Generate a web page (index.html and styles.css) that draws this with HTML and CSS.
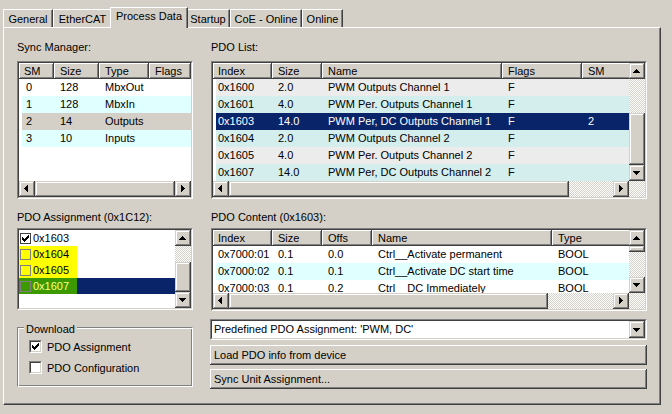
FILE: index.html
```html
<!DOCTYPE html>
<html>
<head>
<meta charset="utf-8">
<title>Process Data</title>
<link rel="stylesheet" href="styles.css">
</head>
<body>
<div class="tabs">
  <div class="tab t-general">General</div>
  <div class="tab t-ethercat">EtherCAT</div>
  <div class="tab t-process active">Process Data</div>
  <div class="tab t-startup">Startup</div>
  <div class="tab t-coe">CoE - Online</div>
  <div class="tab t-online">Online</div>
</div>
<div class="panel">
  <div class="col col-left">
    <div class="label">Sync Manager:</div>
    <div class="lv lv-sm">
      <div class="lv-in">
        <div class="view">
          <div class="hrow"><span class="hc">SM</span><span class="hc">Size</span><span class="hc">Type</span><span class="hc">Flags</span></div>
          <div class="row r-white"><span>0</span><span>128</span><span>MbxOut</span><span></span></div>
          <div class="row r-cyan"><span>1</span><span>128</span><span>MbxIn</span><span></span></div>
          <div class="row r-gray"><span>2</span><span>14</span><span>Outputs</span><span></span></div>
          <div class="row r-cyan"><span>3</span><span>10</span><span>Inputs</span><span></span></div>
        </div>
        <div class="hsb">
          <div class="sbtn sb-left"><svg width="4" height="7" viewBox="0 0 4 7"><path d="M0 3h1v1H0zM1 2h1v3H1zM2 1h1v5H2zM3 0h1v7H3z"/></svg></div>
          <div class="thumb grow"></div>
          <div class="sbtn sb-right"><svg width="4" height="7" viewBox="0 0 4 7"><path d="M0 0h1v7H0zM1 1h1v5H1zM2 2h1v3H2zM3 3h1v1H3z"/></svg></div>
        </div>
      </div>
    </div>
    <div class="label label-2">PDO Assignment (0x1C12):</div>
    <div class="lv listbox">
      <div class="lv-in lb-in">
        <div class="view">
          <div class="li"><span class="li-mark"><span class="lcb lcb-on"><svg width="7" height="7" viewBox="0 0 7 7"><path d="M6 0h1v1H6zM5 1h2v1H5zM0 2h1v1H0zM4 2h3v1H4zM0 3h2v1H0zM3 3h3v1H3zM0 4h5v1H0zM1 5h3v1H1zM2 6h1v1H2z"/></svg></span>0x1603</span></div>
          <div class="li"><span class="li-mark hl-yellow"><span class="lcb"></span>0x1604</span></div>
          <div class="li"><span class="li-mark hl-yellow"><span class="lcb"></span>0x1605</span></div>
          <div class="li li-sel"><span class="li-mark hl-green"><span class="lcb"></span>0x1607</span></div>
        </div>
        <div class="vsb">
          <div class="sbtn sb-up"><svg width="7" height="4" viewBox="0 0 7 4"><path d="M3 0h1v1H3zM2 1h3v1H2zM1 2h5v1H1zM0 3h7v1H0z"/></svg></div>
          <div class="track lb-track"></div>
          <div class="thumb lb-thumb"></div>
          <div class="sbtn sb-down"><svg width="7" height="4" viewBox="0 0 7 4"><path d="M0 0h7v1H0zM1 1h5v1H1zM2 2h3v1H2zM3 3h1v1H3z"/></svg></div>
        </div>
      </div>
    </div>
    <fieldset class="group">
      <legend>Download</legend>
      <div class="chk-row"><span class="cb"><span class="cb-in"><svg width="7" height="7" viewBox="0 0 7 7"><path d="M6 0h1v1H6zM5 1h2v1H5zM0 2h1v1H0zM4 2h3v1H4zM0 3h2v1H0zM3 3h3v1H3zM0 4h5v1H0zM1 5h3v1H1zM2 6h1v1H2z"/></svg></span></span><span>PDO Assignment</span></div>
      <div class="chk-row"><span class="cb"><span class="cb-in"></span></span><span>PDO Configuration</span></div>
    </fieldset>
  </div>

  <div class="col col-right">
    <div class="label shift">PDO List:</div>
    <div class="lv lv-pdo shift">
      <div class="lv-in">
        <div class="view">
          <div class="hrow"><span class="hc">Index</span><span class="hc">Size</span><span class="hc">Name</span><span class="hc">Flags</span><span class="hc">SM</span></div>
          <div class="row r-lgray"><span>0x1600</span><span>2.0</span><span>PWM Outputs Channel 1</span><span>F</span><span></span></div>
          <div class="row r-tcyan"><span>0x1601</span><span>4.0</span><span>PWM Per. Outputs Channel 1</span><span>F</span><span></span></div>
          <div class="row r-sel"><span>0x1603</span><span>14.0</span><span>PWM Per, DC Outputs Channel 1</span><span>F</span><span>2</span></div>
          <div class="row r-tcyan"><span>0x1604</span><span>2.0</span><span>PWM Outputs Channel 2</span><span>F</span><span></span></div>
          <div class="row r-lgray"><span>0x1605</span><span>4.0</span><span>PWM Per. Outputs Channel 2</span><span>F</span><span></span></div>
          <div class="row r-tcyan"><span>0x1607</span><span>14.0</span><span>PWM Per, DC Outputs Channel 2</span><span>F</span><span></span></div>
        </div>
        <div class="vsb">
          <div class="sbtn sb-up"><svg width="7" height="4" viewBox="0 0 7 4"><path d="M3 0h1v1H3zM2 1h3v1H2zM1 2h5v1H1zM0 3h7v1H0z"/></svg></div>
          <div class="track pdo-vtrack"></div>
          <div class="thumb pdo-vthumb"></div>
          <div class="sbtn sb-down"><svg width="7" height="4" viewBox="0 0 7 4"><path d="M0 0h7v1H0zM1 1h5v1H1zM2 2h3v1H2zM3 3h1v1H3z"/></svg></div>
        </div>
        <div class="hsb">
          <div class="sbtn sb-left"><svg width="4" height="7" viewBox="0 0 4 7"><path d="M0 3h1v1H0zM1 2h1v3H1zM2 1h1v5H2zM3 0h1v7H3z"/></svg></div>
          <div class="thumb pdo-hthumb"></div>
          <div class="track grow"></div>
          <div class="sbtn sb-right"><svg width="4" height="7" viewBox="0 0 4 7"><path d="M0 0h1v7H0zM1 1h1v5H1zM2 2h1v3H2zM3 3h1v1H3z"/></svg></div>
        </div>
        <div class="corner"></div>
      </div>
    </div>
    <div class="label label-2 shift">PDO Content (0x1603):</div>
    <div class="lv lv-cnt shift">
      <div class="lv-in">
        <div class="view">
          <div class="hrow"><span class="hc">Index</span><span class="hc">Size</span><span class="hc">Offs</span><span class="hc">Name</span><span class="hc">Type</span></div>
          <div class="row r-white"><span>0x7000:01</span><span>0.1</span><span>0.0</span><span>Ctrl__Activate permanent</span><span>BOOL</span></div>
          <div class="row r-cyan"><span>0x7000:02</span><span>0.1</span><span>0.1</span><span>Ctrl__Activate DC start time</span><span>BOOL</span></div>
          <div class="row r-white"><span>0x7000:03</span><span>0.1</span><span>0.2</span><span>Ctrl__DC Immediately</span><span>BOOL</span></div>
        </div>
        <div class="vsb">
          <div class="sbtn sb-up"><svg width="7" height="4" viewBox="0 0 7 4"><path d="M3 0h1v1H3zM2 1h3v1H2zM1 2h5v1H1zM0 3h7v1H0z"/></svg></div>
          <div class="thumb cnt-vthumb"></div>
          <div class="track grow"></div>
          <div class="sbtn sb-down"><svg width="7" height="4" viewBox="0 0 7 4"><path d="M0 0h7v1H0zM1 1h5v1H1zM2 2h3v1H2zM3 3h1v1H3z"/></svg></div>
        </div>
        <div class="hsb">
          <div class="sbtn sb-left"><svg width="4" height="7" viewBox="0 0 4 7"><path d="M0 3h1v1H0zM1 2h1v3H1zM2 1h1v5H2zM3 0h1v7H3z"/></svg></div>
          <div class="thumb cnt-hthumb"></div>
          <div class="track grow"></div>
          <div class="sbtn sb-right"><svg width="4" height="7" viewBox="0 0 4 7"><path d="M0 0h1v7H0zM1 1h1v5H1zM2 2h1v3H2zM3 3h1v1H3z"/></svg></div>
        </div>
        <div class="corner"></div>
      </div>
    </div>
    <div class="combo">
      <div class="combo-in">
        <span class="combo-text">Predefined PDO Assignment: 'PWM, DC'</span>
        <span class="sbtn combo-btn"><svg width="7" height="4" viewBox="0 0 7 4"><path d="M0 0h7v1H0zM1 1h5v1H1zM2 2h3v1H2zM3 3h1v1H3z"/></svg></span>
      </div>
    </div>
    <div class="btn btn-1">Load PDO info from device</div>
    <div class="btn btn-2">Sync Unit Assignment...</div>
  </div>
</div>
</body>
</html>
```
FILE: styles.css
```css
* { box-sizing: border-box; }
html, body { margin: 0; }
body {
  width: 672px;
  height: 414px;
  overflow: hidden;
  padding: 7px 0 0 3px;
  background: #d4d0c8;
  color: #000;
  font-family: "Liberation Sans", Arial, sans-serif;
  font-size: 11px;
  line-height: 14px;
}

/* tabs */
.tabs {
  display: flex;
  align-items: flex-end;
  height: 21px;
  margin-bottom: -1px;
  position: relative;
  z-index: 1;
}
.tab {
  height: 18px;
  margin-bottom: 1px;
  background: #d4d0c8;
  border-top: 1px solid #fff;
  border-left: 1px solid #fff;
  border-right: 1px solid #404040;
  box-shadow: inset -1px 0 #808080;
  text-align: center;
  line-height: 16px;
  padding-top: 1px;
  white-space: nowrap;
}
.t-general { width: 50px; }
.t-ethercat { width: 59px; }
.t-process { width: 74px; }
.t-startup { width: 44px; }
.t-coe { width: 72px; }
.t-online { width: 41px; }
.tab.active {
  height: 21px;
  width: 78px;
  margin: 0 -2px;
  padding-top: 0;
  position: relative;
  z-index: 2;
}

/* panel */
.panel {
  width: 658px;
  height: 378px;
  border: 1px solid;
  border-color: #fff #404040 #404040 #fff;
  box-shadow: inset -1px -1px #808080;
  padding: 12px 13px 0 13px;
  display: grid;
  grid-template-columns: 176px 437px;
  column-gap: 17px;
  align-items: start;
}
.col { display: flex; flex-direction: column; }
.label {
  height: 14px;
  margin-bottom: 7px;
  white-space: nowrap;
}
.label-2 { margin-top: 11px; margin-bottom: 4px; }
.shift { margin-left: 1px; }

/* list views */
.lv {
  border: 1px solid;
  border-color: #808080 #fff #fff #808080;
  background: #fff;
}
.lv-in {
  height: 100%;
  border: 1px solid;
  border-color: #404040 #d4d0c8 #d4d0c8 #404040;
  display: grid;
  grid-template-columns: minmax(0, 1fr) 16px;
  grid-template-rows: minmax(0, 1fr) 16px;
}
.lv-sm { height: 138px; }
.lv-sm .lv-in { grid-template-columns: minmax(0, 1fr); }
.lv-pdo { height: 138px; }
.lv-cnt { height: 83px; }
.view { overflow: hidden; background: #fff; min-width: 0; }

.hrow { display: grid; height: 16px; }
.hc {
  background: #d4d0c8;
  border-right: 1px solid #404040;
  border-bottom: 1px solid #404040;
  box-shadow: inset 1px 1px #fff, inset -1px -1px #808080;
  padding: 1px 0 0 6px;
  line-height: 14px;
  white-space: nowrap;
  overflow: hidden;
}
.hc:first-child { padding-left: 5px; }
.row {
  display: grid;
  height: 17px;
  line-height: 17px;
  margin-left: 3px;
}
.row > span { padding-left: 6px; white-space: nowrap; overflow: hidden; }
.row > span:first-child { padding-left: 2px; }
.lv-sm .row > span:first-child { padding-left: 4px; }

.lv-sm .hrow { grid-template-columns: 35px 45px 50px 42px; }
.lv-sm .row { grid-template-columns: 32px 45px 50px 42px; }
.lv-pdo .hrow { grid-template-columns: 59px 50px 180px 80px 60px; }
.lv-pdo .row { grid-template-columns: 56px 50px 180px 80px 60px; }
.lv-cnt .hrow { grid-template-columns: 59px 50px 50px 180px 80px; }
.lv-cnt .row { grid-template-columns: 56px 50px 50px 180px 80px; }

.r-white { background: #fff; }
.r-cyan { background: #e0ffff; }
.r-gray { background: #d4d0c8; }
.r-lgray { background: #ececec; }
.r-tcyan { background: #d4eeee; }
.r-sel { background: #0a246a; color: #fff; }

/* scrollbars */
.vsb { display: flex; flex-direction: column; min-height: 0; }
.hsb { display: flex; min-width: 0; }
.sbtn {
  flex: none;
  width: 16px;
  height: 16px;
  background: #d4d0c8;
  box-shadow: inset -1px -1px #404040, inset 1px 1px #d4d0c8, inset -2px -2px #808080, inset 2px 2px #fff;
}
.sbtn svg { display: block; }
.sb-up { padding: 6px 0 0 4px; }
.sb-down { padding: 6px 0 0 4px; }
.sb-left { padding: 4px 0 0 5px; }
.sb-right { padding: 4px 0 0 6px; }
.thumb {
  flex: none;
  background: #d4d0c8;
  box-shadow: inset -1px -1px #404040, inset 1px 1px #d4d0c8, inset -2px -2px #808080, inset 2px 2px #fff;
}
.track, .corner {
  flex: none;
  background: repeating-conic-gradient(#d4d0c8 0% 25%, #fff 0% 50%) 0 0 / 2px 2px;
}
.grow { flex: 1 1 auto; }

.pdo-vtrack { height: 34px; }
.pdo-vthumb { height: 52px; }
.pdo-hthumb { width: 340px; }
.cnt-vthumb { height: 6px; }
.cnt-hthumb { width: 319px; }

/* listbox */
.listbox { height: 82px; }
.lb-in { grid-template-rows: minmax(0, 1fr); }
.li { height: 16px; line-height: 16px; display: flex; }
.li-mark {
  width: 58px;
  display: flex;
  align-items: center;
  padding-left: 1px;
}
.li-sel { background: #0a246a; }
.hl-yellow { background: #ffff00; }
.hl-green { background: #3c9a00; color: #ffff80; }
.lcb {
  width: 11px;
  height: 11px;
  margin-right: 2px;
  border: 1px solid #808080;
  flex: none;
  padding: 1px;
}
.lcb-on { border-color: #404040; background: #fff; }
.lcb svg { display: block; }
.lb-track { height: 16px; }
.lb-thumb { height: 30px; }

/* group box */
.group {
  margin: 8px 0 0 0;
  padding: 0 0 8px 0;
  min-width: 0;
  border: 1px solid;
  border-color: #808080 #fff #fff #808080;
  box-shadow: inset 1px 1px #fff, inset -1px -1px #808080;
}
.group legend {
  margin-left: 6px;
  padding: 4px 2px 0 2px;
  line-height: 14px;
  background: #d4d0c8;
}
.chk-row {
  height: 21px;
  padding-left: 11px;
  display: flex;
  align-items: center;
  gap: 5px;
}
.cb {
  width: 13px;
  height: 13px;
  border: 1px solid;
  border-color: #808080 #fff #fff #808080;
  background: #fff;
  flex: none;
}
.cb-in {
  display: block;
  width: 11px;
  height: 11px;
  border: 1px solid;
  border-color: #404040 #d4d0c8 #d4d0c8 #404040;
  padding: 1px;
}
.cb-in svg { display: block; }

/* combo + buttons */
.combo {
  margin-top: 8px;
  height: 21px;
  border: 1px solid;
  border-color: #808080 #fff #fff #808080;
  background: #fff;
}
.combo-in {
  height: 100%;
  border: 1px solid;
  border-color: #404040 #d4d0c8 #d4d0c8 #404040;
  display: flex;
}
.combo-text {
  flex: 1;
  padding-left: 2px;
  line-height: 17px;
  white-space: nowrap;
}
.combo-btn { height: 17px; padding: 7px 0 0 4px; }
.btn {
  height: 20px;
  line-height: 20px;
  padding-left: 4px;
  background: #d4d0c8;
  box-shadow: inset -1px -1px #404040, inset 1px 1px #fff, inset -2px -2px #808080, inset 2px 2px #d4d0c8;
  white-space: nowrap;
}
.btn-1 { margin-top: 5px; }
.btn-2 { margin-top: 4px; }
```
